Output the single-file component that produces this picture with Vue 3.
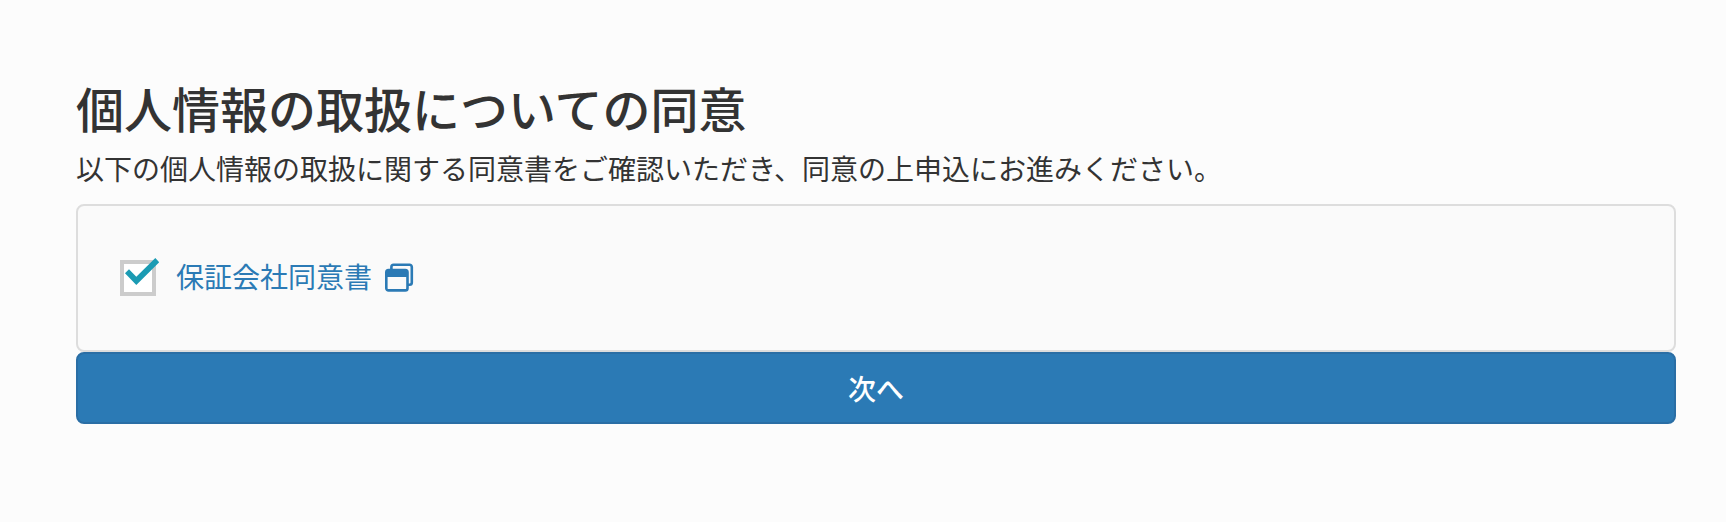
<template>
  <main class="consent">
    <h1 class="consent-title">個人情報の取扱についての同意</h1>
    <p class="consent-lead">
      以下の個人情報の取扱に関する同意書をご確認いただき、同意の上申込にお進みください。
    </p>
    <form @submit.prevent>
      <div class="panel">
        <span class="check">
          <input id="agree" v-model="agreed" class="check-input" type="checkbox" />
          <svg v-if="agreed" class="check-mark" viewBox="0 0 40 40" aria-hidden="true">
            <path d="M5 17.3 9 13.3 16.3 20.8 35.3 2 39.2 6.2 16.3 29z" />
          </svg>
        </span>
        <label for="agree">
          <a class="doc-link" href="#">
            保証会社同意書
            <svg class="doc-icon" viewBox="0 0 30 30" aria-hidden="true">
              <path
                d="M7.4 8V6a2.2 2.2 0 0 1 2.2-2.2h16A2.2 2.2 0 0 1 27.8 6v15.6a2.2 2.2 0 0 1-2.2 2.2H24"
                fill="none"
                stroke="currentColor"
                stroke-width="2.6"
              />
              <rect x="2.3" y="9" width="21.2" height="20.4" rx="2.2" fill="none" stroke="currentColor" stroke-width="2.6" />
              <path d="M2 16V11a2 2 0 0 1 2-2h17.4a2 2 0 0 1 2 2V16z" fill="currentColor" />
            </svg>
          </a>
        </label>
      </div>
      <button class="next" type="submit">次へ</button>
    </form>
  </main>
</template>

<script setup>
import { ref } from 'vue'

const agreed = ref(true)
</script>

<style>
body {
  margin: 0;
  background: #fcfcfc;
}
</style>

<style scoped>
.consent {
  padding: 81px 50px 98px 76px;
  color: #333;
  font-family: "Noto Sans CJK JP", sans-serif;
  font-size: 28px;
  line-height: 40px;
}
.consent-title {
  margin: 0 0 15px;
  font-size: 48px;
  font-weight: 500;
  line-height: 52px;
}
.consent-lead {
  margin: 0 0 16px;
}
.panel {
  display: flex;
  align-items: flex-end;
  gap: 20px;
  padding: 50px 42px 54px;
  border: 2px solid #ddd;
  border-radius: 8px;
  background: #fafafa;
}
.check {
  position: relative;
  display: flex;
}
.check-input {
  appearance: none;
  box-sizing: border-box;
  width: 36px;
  height: 36px;
  margin: 0;
  border: 4px solid #ccc;
  background: #fff;
  cursor: pointer;
}
.check-mark {
  position: absolute;
  left: 0;
  bottom: 0;
  width: 40px;
  height: 40px;
  fill: #1b9bb3;
  pointer-events: none;
}
.doc-link {
  display: flex;
  align-items: center;
  gap: 12px;
  color: #2b7ab5;
  text-decoration: none;
}
.doc-icon {
  width: 30px;
  height: 30px;
  overflow: visible;
}
.next {
  display: block;
  width: 100%;
  padding: 14px 24px;
  border: 2px solid #2a6ea5;
  border-radius: 8px;
  background: #2b7ab5;
  color: #fff;
  font: inherit;
  font-weight: 500;
  cursor: pointer;
}
</style>
